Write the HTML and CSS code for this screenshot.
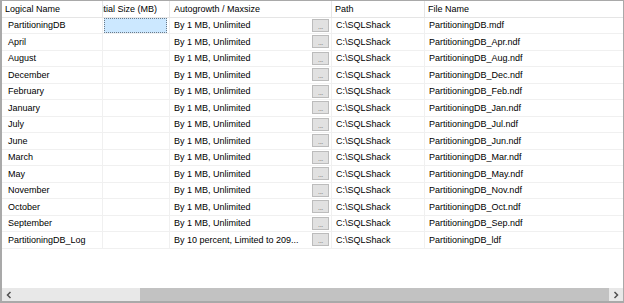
FILE: index.html
```html
<!DOCTYPE html>
<html>
<head>
<meta charset="utf-8">
<link rel="stylesheet" href="styles.css">
</head>
<body>
<div class="frame">
  <div class="grid">
    <div class="row head">
      <div class="c c1">Logical Name</div>
      <div class="c c2 clip"><span class="shift">Initial Size (MB)</span></div>
      <div class="c c3">Autogrowth / Maxsize</div>
      <div class="c c4">Path</div>
      <div class="c c5">File Name</div>
    </div>
    <div class="row"><div class="c c1">PartitioningDB</div><div class="c c2"><div class="sel"></div></div><div class="c c3"><span class="t">By 1 MB, Unlimited</span><span class="btn">...</span></div><div class="c c4">C:\SQLShack</div><div class="c c5">PartitioningDB.mdf</div></div>
    <div class="row"><div class="c c1">April</div><div class="c c2"></div><div class="c c3"><span class="t">By 1 MB, Unlimited</span><span class="btn">...</span></div><div class="c c4">C:\SQLShack</div><div class="c c5">PartitioningDB_Apr.ndf</div></div>
    <div class="row"><div class="c c1">August</div><div class="c c2"></div><div class="c c3"><span class="t">By 1 MB, Unlimited</span><span class="btn">...</span></div><div class="c c4">C:\SQLShack</div><div class="c c5">PartitioningDB_Aug.ndf</div></div>
    <div class="row"><div class="c c1">December</div><div class="c c2"></div><div class="c c3"><span class="t">By 1 MB, Unlimited</span><span class="btn">...</span></div><div class="c c4">C:\SQLShack</div><div class="c c5">PartitioningDB_Dec.ndf</div></div>
    <div class="row"><div class="c c1">February</div><div class="c c2"></div><div class="c c3"><span class="t">By 1 MB, Unlimited</span><span class="btn">...</span></div><div class="c c4">C:\SQLShack</div><div class="c c5">PartitioningDB_Feb.ndf</div></div>
    <div class="row"><div class="c c1">January</div><div class="c c2"></div><div class="c c3"><span class="t">By 1 MB, Unlimited</span><span class="btn">...</span></div><div class="c c4">C:\SQLShack</div><div class="c c5">PartitioningDB_Jan.ndf</div></div>
    <div class="row"><div class="c c1">July</div><div class="c c2"></div><div class="c c3"><span class="t">By 1 MB, Unlimited</span><span class="btn">...</span></div><div class="c c4">C:\SQLShack</div><div class="c c5">PartitioningDB_Jul.ndf</div></div>
    <div class="row"><div class="c c1">June</div><div class="c c2"></div><div class="c c3"><span class="t">By 1 MB, Unlimited</span><span class="btn">...</span></div><div class="c c4">C:\SQLShack</div><div class="c c5">PartitioningDB_Jun.ndf</div></div>
    <div class="row"><div class="c c1">March</div><div class="c c2"></div><div class="c c3"><span class="t">By 1 MB, Unlimited</span><span class="btn">...</span></div><div class="c c4">C:\SQLShack</div><div class="c c5">PartitioningDB_Mar.ndf</div></div>
    <div class="row"><div class="c c1">May</div><div class="c c2"></div><div class="c c3"><span class="t">By 1 MB, Unlimited</span><span class="btn">...</span></div><div class="c c4">C:\SQLShack</div><div class="c c5">PartitioningDB_May.ndf</div></div>
    <div class="row"><div class="c c1">November</div><div class="c c2"></div><div class="c c3"><span class="t">By 1 MB, Unlimited</span><span class="btn">...</span></div><div class="c c4">C:\SQLShack</div><div class="c c5">PartitioningDB_Nov.ndf</div></div>
    <div class="row"><div class="c c1">October</div><div class="c c2"></div><div class="c c3"><span class="t">By 1 MB, Unlimited</span><span class="btn">...</span></div><div class="c c4">C:\SQLShack</div><div class="c c5">PartitioningDB_Oct.ndf</div></div>
    <div class="row"><div class="c c1">September</div><div class="c c2"></div><div class="c c3"><span class="t">By 1 MB, Unlimited</span><span class="btn">...</span></div><div class="c c4">C:\SQLShack</div><div class="c c5">PartitioningDB_Sep.ndf</div></div>
    <div class="row"><div class="c c1">PartitioningDB_Log</div><div class="c c2"></div><div class="c c3"><span class="t">By 10 percent, Limited to 209...</span><span class="btn">...</span></div><div class="c c4">C:\SQLShack</div><div class="c c5">PartitioningDB_ldf</div></div>
  </div>
  <div class="hscroll">
    <div class="arrow">
      <svg width="8" height="8" viewBox="0 0 8 8"><path d="M5.5 1 L2.5 4 L5.5 7" fill="none" stroke="#505050" stroke-width="1.5"/></svg>
    </div>
    <div class="track"><div class="pre"></div><div class="thumb"></div></div>
    <div class="arrow">
      <svg width="8" height="8" viewBox="0 0 8 8"><path d="M2.5 1 L5.5 4 L2.5 7" fill="none" stroke="#505050" stroke-width="1.5"/></svg>
    </div>
  </div>
</div>
</body>
</html>
```
FILE: styles.css
```css
html, body {
  margin: 0;
  padding: 0;
  background: #ffffff;
}
.frame {
  width: 624px;
  height: 303px;
  box-sizing: border-box;
  border: 1px solid #a9a9a9;
  border-left-width: 2px;
  border-bottom-width: 2px;
  display: flex;
  flex-direction: column;
  font-family: "Liberation Sans", Arial, sans-serif;
  font-size: 9px;
  color: #000000;
  background: #ffffff;
  overflow: hidden;
}
.grid {
  flex: 1;
  display: flex;
  flex-direction: column;
}
.row {
  display: flex;
  height: 16.5px;
  flex: none;
}
.c {
  box-sizing: border-box;
  height: 100%;
  border-right: 1px solid #f0f0f0;
  border-bottom: 1px solid #f0f0f0;
  padding-left: 6px;
  display: flex;
  align-items: center;
  white-space: nowrap;
  overflow: hidden;
  position: relative;
}
.c1 { width: 101px; }
.c2 { width: 67px; padding-left: 0; }
.c3 { width: 162px; padding-left: 4px; }
.c4 { width: 93px; padding-left: 4px; }
.c5 { flex: 1; padding-left: 4px; border-right: none; }
.head .c {
  border-right: 1px solid #e5e5e5;
  border-bottom: 1px solid #e5e5e5;
  padding-left: 3px;
}
.head .c2 { padding-left: 0; }
.head .c3 { padding-left: 4px; }
.head .c5 { border-right: none; }
.clip { justify-content: flex-start; }
.shift { margin-left: -9px; }
.sel {
  box-sizing: border-box;
  width: 63px;
  height: 100%;
  margin-left: 1px;
  background: #cce8ff;
  border: 1px dotted #6b7a88;
}
.t { flex: 1; overflow: hidden; }
.btn {
  box-sizing: border-box;
  width: 17px;
  height: 13px;
  margin-right: 2px;
  background: #e1e1e1;
  border: 1px solid #bcbcbc;
  font-size: 7px;
  color: #707070;
  display: flex;
  align-items: flex-end;
  justify-content: center;
  line-height: 9px;
  letter-spacing: -0.3px;
}
.hscroll {
  flex: none;
  height: 13px;
  display: flex;
  background: #e8e8e8;
}
.arrow {
  width: 14px;
  display: flex;
  align-items: center;
  justify-content: center;
}
.track {
  flex: 1;
  display: flex;
}
.pre { width: 124px; }
.thumb {
  flex: 1;
  background: #c2c2c2;
}
```
